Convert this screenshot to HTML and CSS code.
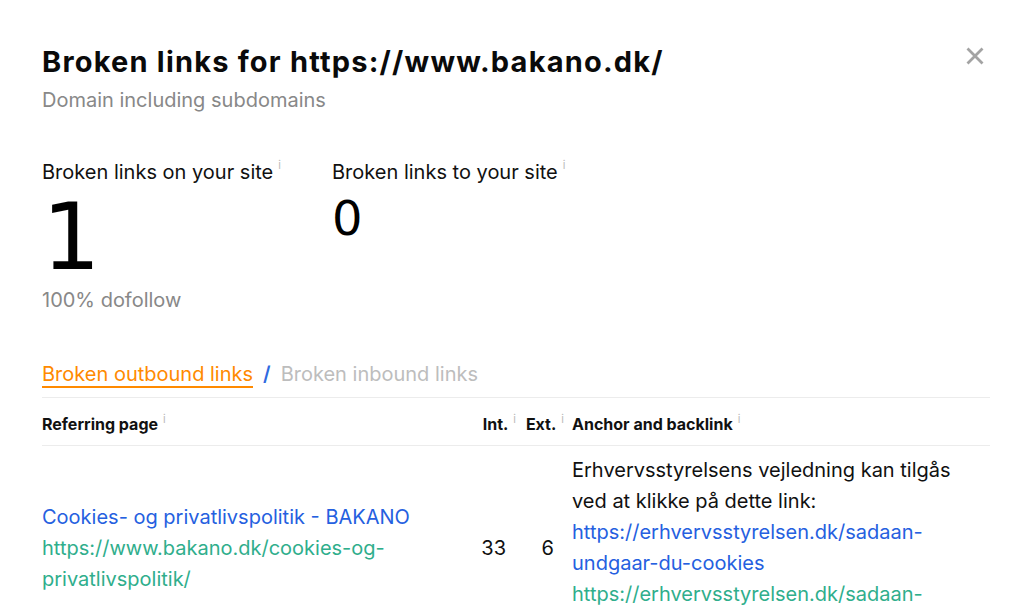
FILE: index.html
```html
<!DOCTYPE html>
<html>
<head>
<meta charset="utf-8">
<link rel="stylesheet" href="styles.css">
</head>
<body>
<div class="modal">
  <button class="close" aria-label="Close">
    <svg width="20" height="20" viewBox="0 0 20 20"><path d="M2.5 2.5 L17.5 17.5 M17.5 2.5 L2.5 17.5" stroke="#a3a3a3" stroke-width="2.8" fill="none"/></svg>
  </button>
  <h1 class="title">Broken links for https://www.bakano.dk/</h1>
  <div class="subtitle">Domain including subdomains</div>

  <div class="stats">
    <div class="stat">
      <div class="stat-label">Broken links on your site<sup class="info">i</sup></div>
      <div class="stat-big">1</div>
      <div class="stat-note">100% dofollow</div>
    </div>
    <div class="stat">
      <div class="stat-label">Broken links to your site<sup class="info">i</sup></div>
      <div class="stat-mid">0</div>
    </div>
  </div>

  <div class="tabs">
    <span class="tab active">Broken outbound links</span>
    <span class="sep">/</span>
    <span class="tab">Broken inbound links</span>
  </div>

  <div class="table">
    <div class="row head">
      <div class="c-page">Referring page<sup class="info">i</sup></div>
      <div class="c-int">Int.<sup class="info">i</sup></div>
      <div class="c-ext">Ext.<sup class="info">i</sup></div>
      <div class="c-anchor">Anchor and backlink<sup class="info">i</sup></div>
    </div>
    <div class="row body">
      <div class="c-page">
        <div class="link-title">Cookies- og privatlivspolitik - BAKANO</div>
        <div class="link-url">https://www.bakano.dk/cookies-og-privatlivspolitik/</div>
      </div>
      <div class="c-int num">33</div>
      <div class="c-ext num">6</div>
      <div class="c-anchor">
        <div class="anchor-text">Erhvervsstyrelsens vejledning kan tilgås ved at klikke på dette link: <span class="blue">https://erhvervsstyrelsen.dk/sadaan-undgaar-du-cookies</span></div>
        <div class="link-url">https://erhvervsstyrelsen.dk/sadaan-undgaar-du-cookies</div>
      </div>
    </div>
  </div>
</div>
</body>
</html>
```
FILE: styles.css
```css
html, body {
  margin: 0;
  padding: 0;
  background: #fff;
  overflow: hidden;
}
body {
  font-family: Inter, "Noto Sans", sans-serif;
  color: #111;
}
.modal {
  position: relative;
  padding: 43px 34px 0 42px;
  height: 610px;
  box-sizing: border-box;
}
.close {
  position: absolute;
  top: 46px;
  right: 39px;
  border: 0;
  background: none;
  padding: 0;
  width: 20px;
  height: 20px;
}
.title {
  margin: 0;
  font-family: Inter, "DejaVu Sans", sans-serif;
  font-size: 29px;
  line-height: 38px;
  font-weight: 700;
  letter-spacing: 1.2px;
  color: #0a0a0a;
}
.subtitle {
  margin-top: 6px;
  font-size: 20px;
  line-height: 26px;
  color: #888;
}
.stats {
  display: flex;
  margin-top: 47px;
}
.stat {
  width: 290px;
}
.stat-label {
  font-size: 20px;
  line-height: 24px;
  color: #111;
}
.info {
  font-size: 11px;
  line-height: 11px;
  color: #bbb;
  margin-left: 5px;
  vertical-align: top;
  font-weight: 400;
  letter-spacing: 0;
}
.stat-big {
  font-family: "DejaVu Sans", sans-serif;
  font-size: 92px;
  line-height: 96px;
  font-weight: 400;
  margin-top: 6px;
  color: #000;
}
.stat-mid {
  font-family: "DejaVu Sans", sans-serif;
  font-size: 48px;
  line-height: 56px;
  margin-top: 6px;
  color: #000;
}
.stat-note {
  font-size: 20px;
  line-height: 26px;
  color: #888;
  margin-top: 1px;
}
.tabs {
  margin-top: 49px;
  font-size: 20px;
  line-height: 24px;
  display: flex;
  gap: 10px;
  align-items: flex-start;
}
.tab {
  color: #bdbdbd;
}
.tab.active {
  color: #ff8a00;
  border-bottom: 2px solid #ff8a00;
}
.sep {
  color: #2f6ae0;
  font-weight: 600;
}
.table {
  margin-top: 9px;
  width: 948px;
  border-top: 1px solid #ececec;
}
.row {
  display: grid;
  grid-template-columns: 428px 48px 48px 1fr;
  column-gap: 0;
}
.row.head {
  font-size: 16px;
  line-height: 20px;
  font-weight: 700;
  padding: 16px 0 11px;
  border-bottom: 1px solid #ececec;
}
.row.head .c-int, .row.head .c-ext {
  text-align: right;
  padding-right: 2px;
}
.row.head .c-anchor {
  padding-left: 6px;
}
.row.body {
  font-size: 20px;
  line-height: 31px;
  align-items: center;
  padding-top: 9px;
}
.num {
  text-align: right;
  color: #111;
  padding-right: 12px;
}
.c-anchor {
  padding-left: 6px;
}
.row.body .c-anchor {
  width: 395px;
}
.link-title, .blue {
  color: #2560e0;
}
.link-url {
  color: #2fae8c;
}
.anchor-text {
  color: #111;
}
```
